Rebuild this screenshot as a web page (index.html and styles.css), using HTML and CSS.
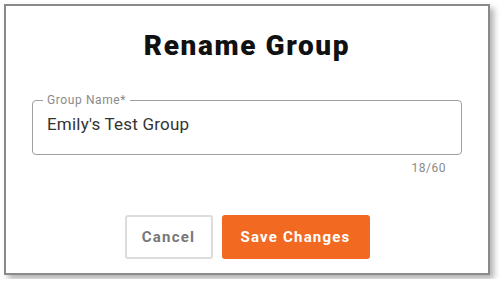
FILE: index.html
```html
<!DOCTYPE html>
<html lang="en">
<head>
    <meta charset="UTF-8">
    <meta name="viewport" content="width=device-width, initial-scale=1.0">
    <title>Rename Group</title>
    <link rel="stylesheet" href="styles.css">
</head>
<body>
<div class="dialog">
    <h1 class="dialog-title">Rename Group</h1>
    <form class="dialog-form">
        <fieldset class="field">
            <legend class="field-label">Group Name*</legend>
            <input class="field-input" type="text" value="Emily's Test Group" maxlength="60">
        </fieldset>
        <div class="field-count">18/60</div>
        <div class="actions">
            <button type="button" class="btn btn-cancel">Cancel</button>
            <button type="submit" class="btn btn-save">Save Changes</button>
        </div>
    </form>
</div>
</body>
</html>
```

FILE: styles.css
```css
body {
    font-family: Roboto, 'Liberation Sans', sans-serif;
    background: #fff;
    margin: 0;
    color: #333;
}
.dialog {
    box-sizing: border-box;
    margin: 4px;
    width: 486px;
    height: 271px;
    border: 2px solid #8a8a8a;
    background: #fff;
    box-shadow: 4px 4px 6px rgba(0,0,0,0.3);
    padding: 0 26px;
}
.dialog-title {
    margin: 24px 0 0;
    font-size: 28px;
    line-height: 32px;
    font-weight: 900;
    letter-spacing: 1.6px;
    text-align: center;
    color: #111;
}
.dialog-form {
    display: flex;
    flex-direction: column;
}
.field {
    margin: 31px 0 0;
    padding: 0 10px 0 10px;
    border: 1px solid #a0a0a0;
    border-radius: 4px;
    height: 62px;
    box-sizing: border-box;
}
.field-label {
    padding: 0 4px;
    font-size: 12px;
    line-height: 14px;
    letter-spacing: 0.6px;
    color: #8a8a8a;
}
.field-input {
    border: none;
    outline: none;
    width: 100%;
    box-sizing: border-box;
    padding: 0 4px;
    margin-top: 6px;
    font-family: Roboto, 'Liberation Sans', sans-serif;
    font-size: 17px;
    line-height: 22px;
    letter-spacing: 0.2px;
    color: #333;
    background: transparent;
}
.field-count {
    align-self: flex-end;
    margin: 6px 16px 0 0;
    font-size: 12px;
    line-height: 14px;
    letter-spacing: 0.5px;
    color: #8a8a8a;
}
.actions {
    display: flex;
    justify-content: center;
    gap: 9px;
    margin-top: 40px;
}
.btn {
    box-sizing: border-box;
    height: 44px;
    border-radius: 3px;
    font-family: Roboto, 'Liberation Sans', sans-serif;
    font-size: 15px;
    font-weight: 700;
    letter-spacing: 1.2px;
    cursor: pointer;
}
.btn-cancel {
    width: 88px;
    background: #fff;
    border: 2px solid #dcdcdc;
    color: #777;
}
.btn-save {
    width: 148px;
    background: #f26a22;
    border: none;
    color: #fff;
}
```
